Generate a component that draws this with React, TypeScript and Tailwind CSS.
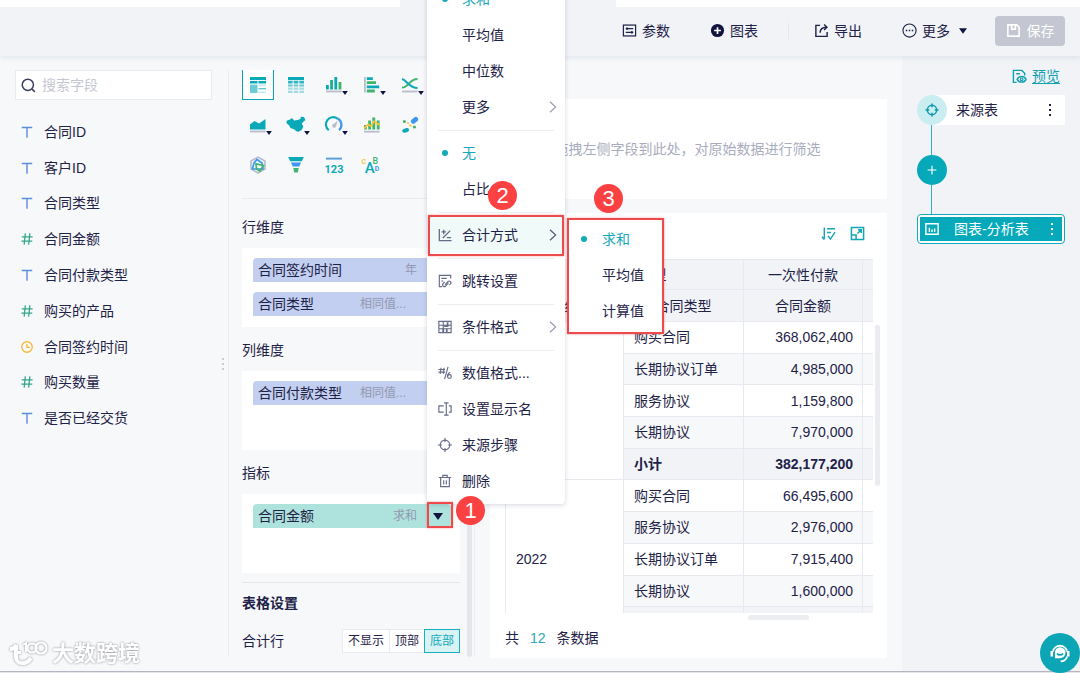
import React from "react";

type Kids = { children?: React.ReactNode };

function Icon({ children, size = "size-4", className = "" }: Kids & { size?: string; className?: string }) {
  return (
    <svg viewBox="0 0 16 16" fill="none" stroke="currentColor" strokeWidth="1.3" aria-hidden="true" className={`${size} shrink-0 ${className}`}>
      {children}
    </svg>
  );
}

function Caret({ className = "" }: { className?: string }) {
  return (
    <svg viewBox="0 0 10 7" aria-hidden="true" className={`shrink-0 fill-[#10143f] ${className}`}>
      <path d="M0 0h10L5 7z" />
    </svg>
  );
}

/* ---------- header ---------- */

function Header() {
  return (
    <header className="relative z-10 shrink-0 bg-[#f1f3f7] shadow-[0_2px_5px_rgba(200,210,220,0.45)]">
      <div className="flex h-[7px] justify-between">
        <div className="w-[400px] bg-white" />
        <div className="w-[464px] bg-white" />
      </div>
      <div className="flex h-[49px] items-center justify-end pr-[15px] pb-[2px]">
        <button className="flex items-center gap-[5px]">
          <Icon size="size-[15px]">
            <rect x="1.5" y="2.2" width="13" height="11.6" />
            <path d="M4 6h8M4 10h8" />
            <path d="M5.5 4.8v2.4M10.5 8.8v2.4" strokeWidth="2" />
          </Icon>
          参数
        </button>
        <button className="ml-10 flex items-center gap-[5px]">
          <Icon size="size-[15px]">
            <circle cx="8" cy="8" r="7" fill="#10143f" stroke="none" />
            <path d="M8 4.4v7.2M4.4 8h7.2" stroke="#fff" strokeWidth="1.8" />
          </Icon>
          图表
        </button>
        <span className="mr-[25px] ml-[30px] h-4 w-px bg-[#e4e7ed]" />
        <button className="flex items-center gap-[5px]">
          <Icon size="size-[15px]">
            <path d="M6.5 2.5H2v11.8h12V9.500" strokeWidth="1.5" />
            <path d="M6.500 10.5c0-4 2-6 7-6M10.8 1.6l3 2.9-3 2.9" strokeWidth="1.5" />
          </Icon>
          导出
        </button>
        <button className="ml-10 flex items-center gap-[5px]">
          <Icon size="size-[15px]">
            <circle cx="8" cy="8" r="7" strokeWidth="1.2" />
            <path d="M4 8h1.6M7.2 8h1.6M10.4 8H12" strokeWidth="1.6" />
          </Icon>
          更多
          <Caret className="ml-1 h-[6px] w-2" />
        </button>
        <button className="ml-7 flex h-[30px] w-[70px] items-center justify-center gap-[6px] rounded-sm bg-[#c4c6d1] text-white">
          <Icon size="size-[15px]">
            <path d="M2 2h9.5L14 4.5V14H2zM6 2v4.5h4V2" strokeWidth="1.7" />
          </Icon>
          保存
        </button>
      </div>
    </header>
  );
}

/* ---------- field list ---------- */

type FieldKind = "text" | "number" | "date";

const fields: { name: string; kind: FieldKind }[] = [
  { name: "合同ID", kind: "text" },
  { name: "客户ID", kind: "text" },
  { name: "合同类型", kind: "text" },
  { name: "合同金额", kind: "number" },
  { name: "合同付款类型", kind: "text" },
  { name: "购买的产品", kind: "number" },
  { name: "合同签约时间", kind: "date" },
  { name: "购买数量", kind: "number" },
  { name: "是否已经交货", kind: "text" },
];

function FieldIcon({ kind }: { kind: FieldKind }) {
  if (kind === "text")
    return (
      <Icon size="size-3" className="text-[#5d8fd8]">
        <path d="M1 2h14M8 2v13.500" strokeWidth="1.9" />
      </Icon>
    );
  if (kind === "number")
    return (
      <Icon size="size-3" className="text-[#35a58c]">
        <path d="M5.800 .5 4.200 15.500M11.800 .5l-1.600 15M1 5.200h14.500M.5 10.800h14.500" strokeWidth="1.7" />
      </Icon>
    );
  return (
    <Icon size="size-3" className="text-[#f5b83a]">
      <circle cx="8" cy="8" r="7" strokeWidth="1.8" />
      <path d="M8 4v4.5h4" strokeWidth="1.8" />
    </Icon>
  );
}

function FieldPanel() {
  return (
    <aside className="flex w-[229px] shrink-0 py-[14px]">
      <div className="flex min-w-0 flex-1 flex-col border-r border-[#eaedf1] pl-[15px]">
        <label className="mr-4 flex h-[30px] items-center gap-[6px] border border-[#e9ebef] bg-white px-[5px]">
          <Icon size="size-[15px]" className="text-[#3a3f5e]">
            <circle cx="7.3" cy="7.3" r="6" strokeWidth="1.6" />
            <path d="m11.6 11.6 3.2 3.2" strokeWidth="1.6" />
          </Icon>
          <input aria-label="搜索字段" placeholder="搜索字段" className="w-full min-w-0 bg-transparent outline-none placeholder:text-[#c5c7d2]" />
        </label>
        <ul className="mt-[14px] grid h-[322px] grid-rows-9">
          {fields.map((f) => (
            <li key={f.name} className="flex items-center gap-[11px] pl-[6px]">
              <FieldIcon kind={f.kind} />
              {f.name}
            </li>
          ))}
        </ul>
      </div>
      <span className="absolute top-[358px] left-[222px] flex flex-col gap-[3px]">
        <i className="size-[2px] bg-[#c9ccd5]" />
        <i className="size-[2px] bg-[#c9ccd5]" />
        <i className="size-[2px] bg-[#c9ccd5]" />
      </span>
    </aside>
  );
}

/* ---------- chart type icons ---------- */

const T = "#0aa9b8";
const G = "#3fb46d";
const Y = "#f5c33b";
const B = "#3c97f0";
const GR = "#b9bccb";

const charts: { name: string; more?: boolean; art: React.ReactNode }[] = [
  {
    name: "分析表",
    art: (
      <g fill={T}>
        <path d="M1 1h16v3H1zM1 5h7.5v2.6H1zM9.5 5H17v2.6H9.5z" />
        <path d="M1 8.6h7.5V17H1z" opacity=".6" />
        <path d="M9.5 8.6H17v1.6H9.5zM9.5 15.4H17V17H9.5z" opacity=".25" />
        <path d="M9.5 12H17v1.4H9.5z" opacity=".65" />
      </g>
    ),
  },
  {
    name: "明细表",
    art: (
      <g fill={T}>
        <path d="M1 1h16v3.2H1z" />
        <path d="M1 5h4.6v2.4H1zM6.7 5h4.6v2.4H6.7zM12.4 5H17v2.4h-4.6z" opacity=".85" />
        <path d="M1 8.4h4.6v2.2H1zM6.7 8.4h4.6v2.2H6.7zM12.4 8.4H17v2.2h-4.6z" opacity=".6" />
        <path d="M1 11.6h4.6v2.2H1zM6.7 11.6h4.6v2.2H6.7zM12.4 11.6H17v2.2h-4.6zM1 14.8h4.6V17H1zM6.7 14.8h4.6V17H6.7zM12.4 14.8H17V17h-4.6z" opacity=".35" />
      </g>
    ),
  },
  {
    name: "柱状图",
    more: true,
    art: (
      <>
        <path d="M1 9h2.800v4.400H1zM9.400 1h2.800v12.400H9.400z" fill={T} />
        <path d="M5.200 4h2.800v9.400H5.200zM13.600 6h2.800v7.400h-2.800z" fill={G} />
        <path d="M5.200 4h2.800v9.400H5.200z" fill={T} opacity=".45" />
        <path d="M1 14.6h15.6v1.8H1z" fill={GR} />
      </>
    ),
  },
  {
    name: "条形图",
    more: true,
    art: (
      <>
        <path d="M1 1h1.8v15.6H1z" fill={GR} />
        <path d="M3.8 1.2h6v2.8h-6zM3.8 9.4h12.4v2.8H3.8z" fill={T} />
        <path d="M3.8 5.2H13V8H3.8zM3.8 13.6h8v2.8h-8z" fill={G} />
      </>
    ),
  },
  {
    name: "折线图",
    more: true,
    art: (
      <g fill="none" strokeWidth="2">
        <path d="M1 11.5c7 0 7-8.5 15.5-8.5" stroke={G} />
        <path d="M1 3c5 1 7 9 15.5 9" stroke={T} />
        <path d="M1 15.5h15.6" stroke={GR} strokeWidth="1.8" />
      </g>
    ),
  },
  {
    name: "面积图",
    more: true,
    art: (
      <>
        <path d="M1 8.5 5.5 5l4.5 2.5L16.5 3v10.4H1z" fill={T} />
        <path d="M1 14.6h15.6v1.8H1z" fill={GR} />
      </>
    ),
  },
  {
    name: "地图",
    more: true,
    art: (
      <path
        d="M-.5 4.8 3 3.500 5 2l2 2.500 3.500-.4L13.5 3l.3-2.200L17 1l1.4 3-1.8 1.6-1.8 2.2 1.600 2.8-1.8 3.400-3 1.800-2.400-.6-1.700-1.800L3.500 12 2 9.200-.3 7.500z"
        fill={T}
      />
    ),
  },
  {
    name: "仪表盘",
    more: true,
    art: (
      <g fill="none" strokeWidth="2.200">
        <path d="M3.8 14.2A7.2 7.2 0 0 1 12.5 2.6" stroke={T} />
        <path d="M12.500 2.600A7 7 0 0 1 14 14.2" stroke={B} />
        <path d="M12.8 4.8 11 10.2a2 2 0 1 1-2.5-2.3z" fill={GR} stroke="none" />
      </g>
    ),
  },
  {
    name: "组合图",
    art: (
      <>
        <path d="M1 9h2.800v4.400H1zM9.400 1.600h2.800v11.8H9.400zM5.200 4.500h2.800v8.900H5.200zM13.800 4.500h2.800v8.900h-2.800z" fill={G} />
        <path d="M1 12.500 5 8.500l3 1.500L11 5.500l5.600 3.500" fill="none" stroke={Y} strokeWidth="1.8" />
        <path d="M1 14.8h15.6v1.8H1z" fill={GR} />
      </>
    ),
  },
  {
    name: "散点图",
    art: (
      <>
        <path d="m12.2 5.4 2.6-2" stroke={B} strokeWidth="4.8" strokeLinecap="round" />
        <path d="m3.2 14.8 2.8-.8" stroke={T} strokeWidth="4" strokeLinecap="round" />
        <circle cx="3.4" cy="5.4" r="1.5" fill={G} />
        <circle cx="13.5" cy="11" r="1.6" fill={G} />
        <circle cx="7" cy="7" r="1.1" fill={Y} />
        <circle cx="9.4" cy="9.6" r="1.2" fill={Y} />
      </>
    ),
  },
  {
    name: "雷达图",
    art: (
      <g fill="none" strokeWidth="1.7">
        <path d="M9 1.2 16 5v8l-7 4-7-4V5z" stroke={GR} />
        <path d="m8 3.5 5 3.5 1 6H3.5L5 7z" stroke={B} />
        <path d="m7 7.8 7.5 1.7-3.6 5.5-3.4-2z" stroke={G} />
      </g>
    ),
  },
  {
    name: "漏斗图",
    art: (
      <>
        <path d="M1.2 1h15.6l-2 4.2H3.2z" fill={T} />
        <path d="M4 6.6h10l-1.7 4H5.7z" fill={B} />
        <path d="M6.3 12h5.4l-1 4.6H7.3z" fill={G} />
      </>
    ),
  },
  {
    name: "指标卡",
    art: (
      <>
        <path d="M1 1.600h16v2H1z" fill="#5d9fdc" />
        <text x="9" y="16.600" textAnchor="middle" fontSize="11" fontWeight="700" fontFamily="Roboto" fill={T}>
          123
        </text>
      </>
    ),
  },
  {
    name: "词云",
    art: (
      <g fontFamily="Roboto">
        <text x="1.800" y="17" fontSize="15" fontWeight="500" fill={T}>A</text>
        <text x="-1.500" y="7.500" fontSize="7" fontWeight="700" fill={Y}>C</text>
        <text x="9.500" y="8" fontSize="9" fontWeight="500" fill={G}>B</text>
        <text x="11.800" y="15" fontSize="7" fontWeight="700" fill={B}>D</text>
      </g>
    ),
  },
];

function ChartPicker() {
  return (
    <div className="grid auto-rows-[40px] grid-cols-[repeat(5,38px)] border-b border-[#e8ebef] pb-2">
      {charts.map((c, i) => (
        <button
          key={c.name}
          aria-label={c.name}
          className={`relative flex h-[30px] w-8 items-center justify-center ${i === 0 ? "border border-t-0 border-[#0ba5b8] bg-white" : ""}`}
        >
          <svg viewBox="0 0 18 18" className="size-[18px] overflow-visible" aria-hidden="true">
            {c.art}
          </svg>
          {c.more && <Caret className="absolute right-[2px] bottom-[5px] h-[4px] w-[6px]" />}
        </button>
      ))}
    </div>
  );
}

/* ---------- configuration panel ---------- */

function Chip({ name, hint, green }: { name: string; hint: string; green?: boolean }) {
  return (
    <div className={`flex h-6 items-center rounded-t-[4px] pl-[5px] ${green ? "bg-[#aee2dc]" : "bg-[#c2cff0]"}`}>
      <span className="flex-1">{name}</span>
      <span className={`text-xs text-[#9298b0] ${hint.endsWith("...") ? "mr-[11px]" : ""}`}>{hint}</span>
      <button aria-label={`${name}设置`} className="flex h-6 w-[34px] items-center justify-center pl-2">
        <Caret className="h-[7px] w-[10px]" />
      </button>
    </div>
  );
}

function DropZone({ title, children }: Kids & { title: string }) {
  return (
    <section>
      <h3 className="flex h-11 items-center pt-[2px] leading-5">{title}</h3>
      <div className="flex h-[79px] flex-col gap-[10px] bg-white pt-[10px] pr-[9px] pl-[11px]">{children}</div>
    </section>
  );
}

function ConfigPanel() {
  return (
    <section className="flex w-[246px] shrink-0 py-[14px]">
      <div className="flex min-w-0 flex-1 border-r border-[#eaedf1] pl-[13px]">
        <div className="min-w-0 flex-1">
          <ChartPicker />
          <div className="flex flex-col pt-[5px]">
            <DropZone title="行维度">
              <Chip name="合同签约时间" hint="年" />
              <Chip name="合同类型" hint="相同值..." />
            </DropZone>
            <DropZone title="列维度">
              <Chip name="合同付款类型" hint="相同值..." />
            </DropZone>
            <DropZone title="指标">
              <Chip name="合同金额" hint="求和" green />
            </DropZone>
          </div>
          <div className="mt-[9px] border-t border-[#e4e7ec] pt-[10px]">
            <h3 className="leading-5 font-bold">表格设置</h3>
            <div className="mt-4 flex h-6 items-center justify-between">
              <span>合计行</span>
              <div className="flex h-6 text-xs">
                <button className="border border-r-0 border-[#e8ebef] bg-white px-[5px]">不显示</button>
                <button className="border border-r-0 border-[#e8ebef] bg-white px-[5px]">顶部</button>
                <button className="border border-[#12b0c0] bg-[#d9f3f5] px-[5px] text-[#12a9ba]">底部</button>
              </div>
            </div>
          </div>
        </div>
        <div className="mr-[2px] ml-[7px] flex w-[5px] flex-col justify-end">
          <div className="h-[400px] rounded-full bg-[#e5e6ec]" />
        </div>
      </div>
    </section>
  );
}

/* ---------- table ---------- */

const rows: { year?: string; type: string; amount: string; total?: boolean }[] = [
  { year: "2021", type: "购买合同", amount: "368,062,400" },
  { type: "长期协议订单", amount: "4,985,000" },
  { type: "服务协议", amount: "1,159,800" },
  { type: "长期协议", amount: "7,970,000" },
  { type: "小计", amount: "382,177,200", total: true },
  { year: "2022", type: "购买合同", amount: "66,495,600" },
  { type: "服务协议", amount: "2,976,000" },
  { type: "长期协议订单", amount: "7,915,400" },
  { type: "长期协议", amount: "1,600,000" },
  { type: "小计", amount: "78,987,000", total: true },
];

const line = "border-[#e6e9ef]";

function DataTable() {
  return (
    <div className="min-h-0 flex-1 overflow-hidden">
      <table className="h-[380px] w-[490px] table-fixed border-separate border-spacing-0 leading-5">
        <colgroup>
          <col className="w-[119px]" />
          <col className="w-[120px]" />
          <col className="w-[119px]" />
          <col />
        </colgroup>
        <thead className="bg-[#f1f3f7]">
          <tr className="h-[31px]">
            <th colSpan={2} className={`border-t border-r border-b border-l ${line} p-0 font-normal`}>合同付款类型</th>
            <th className={`border-t border-r border-b ${line} p-0 font-normal`}>一次性付款</th>
            <th className={`border-t border-b ${line} p-0`} />
          </tr>
          <tr className="h-8">
            <th className={`border-r border-b border-l ${line} p-0 font-normal`}>合同签约时间</th>
            <th className={`border-r border-b ${line} p-0 font-normal`}>合同类型</th>
            <th className={`border-r border-b ${line} p-0 font-normal`}>合同金额</th>
            <th className={`border-b ${line} p-0`} />
          </tr>
        </thead>
        <tbody>
          {rows.map((r, i) => (
            <tr key={i} className={r.total ? "bg-[#f1f3f7] font-bold" : i % 5 === 1 || i % 5 === 3 ? "bg-[#f7f8fa]" : "bg-white"}>
              {r.year && (
                <td rowSpan={5} className={`border-r border-b border-l ${line} bg-white p-0 pl-[10px]`}>
                  {r.year}
                </td>
              )}
              <td className={`border-r border-b ${line} p-0 pl-[10px]`}>{r.type}</td>
              <td className={`border-r border-b ${line} p-0 pr-[9px] text-right`}>{r.amount}</td>
              <td className={`border-b ${line} p-0`} />
            </tr>
          ))}
        </tbody>
      </table>
    </div>
  );
}

function Main() {
  return (
    <main className="flex min-w-0 flex-1 flex-col gap-[14px] px-[15px] pt-[43px] pb-[13px]">
      <div className="flex h-[100px] shrink-0 items-center justify-center bg-white pr-[2px] whitespace-nowrap text-[#a9acbd]">
        拖拽左侧字段到此处，对原始数据进行筛选
      </div>
      <div className="flex min-h-0 flex-1 flex-col bg-white pl-[15px]">
        <div className="flex h-[46px] shrink-0 items-center justify-end gap-[14px] pr-[22px] pb-[5px] text-[#12a5b6]">
          <button aria-label="排序">
            <Icon size="size-[15px]" className="block">
              <path d="M3.500 1.500v12.500M1 11.500l2.500 3M6.500 3H15M6.500 7h4M7.500 10.500l2.500 3.500 5-7.500" strokeWidth="1.500" />
            </Icon>
          </button>
          <button aria-label="放大">
            <Icon size="size-[15px]" className="block">
              <path d="M1.5 1.5h13v13h-13zM1.5 9.5h5v5M8 8l4-4M8.5 4H12v3.5" strokeWidth="1.6" />
            </Icon>
          </button>
        </div>
        <div className="flex min-h-0 flex-1">
          <DataTable />
          <div className="mr-[7px] ml-[2px] w-[5px] pt-[66px]">
            <div className="h-[161px] rounded-full bg-[#ebecf0]" />
          </div>
        </div>
        <div className="mt-[2px] ml-[243px] h-[5px] w-[61px] shrink-0 rounded-full bg-[#ecedf0]" />
        <p className="flex h-[38px] shrink-0 items-center gap-[11px] pb-[3px]">
          共 <span className="text-[#2aa9ba]">12</span> 条数据
        </p>
      </div>
    </main>
  );
}

/* ---------- flow panel ---------- */

function Dots({ className }: { className: string }) {
  return (
    <span className={`flex flex-col gap-[3px] ${className}`}>
      <i className="size-[2px] bg-current" />
      <i className="size-[2px] bg-current" />
      <i className="size-[2px] bg-current" />
    </span>
  );
}

function FlowPanel() {
  return (
    <aside className="w-[178px] shrink-0 bg-[#f1f3f7] px-[15px] pt-[10px]">
      <a href="#preview" className="mr-[5px] flex h-5 items-center justify-end gap-[5px] text-[#129fb2]">
        <Icon size="size-[15px]">
          <path d="M5 14.300H1.500V1.500h9L13.500 4.500V7M4.500 5h4" strokeWidth="1.500" />
          <path d="M5.500 11c2-4 7.500-4 9.500 0-2 4-7.500 4-9.500 0z" strokeWidth="1.500" />
          <circle cx="10.300" cy="11" r="1.400" />
        </Icon>
        <span className="underline underline-offset-2">预览</span>
      </a>
      <div className="mt-[9px] flex flex-col">
        <div className="flex h-[30px] items-center bg-gradient-to-r from-transparent from-[15px] to-white to-[15px]">
          <span className="flex size-[30px] items-center justify-center rounded-full bg-[#c9edf0] text-[#0d9aac]">
            <Icon size="size-[14px]">
              <circle cx="8" cy="8" r="5.3" strokeWidth="1.7" />
              <path d="M8 .5v4.300M8 11.200v4.300M.5 8h4.300M11.200 8h4.300" strokeWidth="1.7" />
            </Icon>
          </span>
          <span className="ml-[9px] flex-1">来源表</span>
          <button aria-label="来源表操作">
            <Dots className="mr-[14px]" />
          </button>
        </div>
        <span className="ml-[14px] h-[30px] w-px bg-[#2fb3c2]" />
        <button aria-label="添加步骤" className="flex size-[30px] items-center justify-center rounded-full bg-[#05a9ba] text-white">
          <Icon size="size-[10px]">
            <path d="M8 1v14M1 8h14" strokeWidth="1.8" />
          </Icon>
        </button>
        <span className="ml-[14px] h-[29px] w-px bg-[#2fb3c2]" />
        <div className="h-[30px] rounded-sm border border-[#12a9ba] bg-white p-[2px]">
          <div className="flex h-full items-center bg-[#05a9ba] pl-[5px] text-white">
            <Icon size="size-[14px]">
              <path d="M1 2h14v12H1zM5 6.500v5M8 8.500v3M11 7.500v4" strokeWidth="1.6" />
            </Icon>
            <span className="ml-[15px] flex-1 whitespace-nowrap">图表-分析表</span>
            <button aria-label="分析表操作">
              <Dots className="mr-[9px]" />
            </button>
          </div>
        </div>
      </div>
    </aside>
  );
}

/* ---------- menus ---------- */

function MenuItem({ children, icon, active, dot, arrow }: Kids & { icon?: React.ReactNode; active?: boolean; dot?: boolean; arrow?: boolean }) {
  return (
    <button
      role="menuitem"
      className={`flex h-9 w-full shrink-0 items-center pr-[6px] pl-[11px] text-left ${active ? "bg-[#f0faf9]" : ""} ${dot ? "text-[#12a9b8]" : ""}`}
    >
      <span className="flex w-6 shrink-0 text-[#666b87]">
        {icon && <Icon size="size-[14px]">{icon}</Icon>}
        {dot && <i className="ml-1 size-[6px] rounded-full bg-[#12a9b8]" />}
      </span>
      <span className="flex-1 whitespace-nowrap">{children}</span>
      {arrow && (
        <Icon size="size-3" className={active ? "text-[#555a75]" : "text-[#9a9db0]"}>
          <path d="m4 1 7.500 7-7.500 7" strokeWidth="1.6" />
        </Icon>
      )}
    </button>
  );
}

function Separator() {
  return <hr className="mx-[11px] mt-[5px] mb-1 border-[#eceef2]" />;
}

function MetricMenu() {
  return (
    <div role="menu" className="absolute -top-6 left-[427px] z-20 w-[138px] rounded-b bg-white py-[5px] shadow-[0_1px_5px_rgba(60,70,100,0.22)]">
      <MenuItem dot>求和</MenuItem>
      <MenuItem>平均值</MenuItem>
      <MenuItem>中位数</MenuItem>
      <MenuItem arrow>更多</MenuItem>
      <Separator />
      <MenuItem dot>无</MenuItem>
      <MenuItem>占比</MenuItem>
      <Separator />
      <MenuItem active arrow icon={<path d="M1.500 1v13.500H15.500M5.500 11.500 14 3M4 4.500h5M6.500 2v5M10 11h5" strokeWidth="1.5" />}>
        合计方式
      </MenuItem>
      <Separator />
      <MenuItem icon={<path d="M14.500 5V1.500h-13v13h3M4 5h6M4 8h2M8 12.500l3.500-4a2 2 0 0 1 3 2.500l-1.500 1.500M12 10l-3.500 4a2 2 0 0 1-3-2.500L7.500 9" />}>
        跳转设置
      </MenuItem>
      <Separator />
      <MenuItem arrow icon={<><path d="M1 1.500h14v13H1zM1 6h14M1 10h14M6 1.500v13" /><path d="M7 7h4V2.500M6 10v4M10 10v4" strokeWidth="2" /></>}>
        条件格式
      </MenuItem>
      <Separator />
      <MenuItem icon={<><path d="M3.500 2 2.500 9M7 2 6 9M.5 4h7.500M.5 7h7.500M11.500 1 7.500 15" /><circle cx="13" cy="12" r="2.200" /><path d="M11 12c0-3 1-4 3-4.500" /></>}>
        数值格式...
      </MenuItem>
      <MenuItem icon={<path d="M6.500 4.500H1v7h5.500M12.500 4.500H15v7h-2.500M9.500 1.500v13M7 1h5M7 15h5" />}>设置显示名</MenuItem>
      <MenuItem icon={<><circle cx="8" cy="8" r="5.500" /><path d="M8 0v4.500M8 11.500V16M0 8h4.500M11.500 8H16" /></>}>来源步骤</MenuItem>
      <MenuItem icon={<path d="M1 4h14M5.500 4V1.500h5V4M3 4v10.500h10V4M6.500 7v5M9.500 7v5" />}>删除</MenuItem>
    </div>
  );
}

function TotalMenu() {
  return (
    <div role="menu" className="absolute top-[217px] left-[568px] z-20 w-[95px] bg-white py-1 shadow-sm">
      {["求和", "平均值", "计算值"].map((t, i) => (
        <button key={t} role="menuitem" className={`flex h-9 w-full items-center pl-[13px] ${i === 0 ? "text-[#12a9b8]" : ""}`}>
          <span className="w-[21px]">{i === 0 && <i className="block size-[6px] rounded-full bg-[#12a9b8]" />}</span>
          {t}
        </button>
      ))}
    </div>
  );
}

function Callouts() {
  const badge = "absolute z-30 flex size-[29px] items-center justify-center rounded-full bg-[#fc4143] text-[22px] leading-none text-white";
  const frame = "pointer-events-none absolute z-30 border-2 border-[#ee4a4c] shadow-[0_0_2px_rgba(238,74,76,0.5)]";
  return (
    <>
      <div className={`${frame} top-[215px] left-[428px] h-[41px] w-[136px]`} />
      <div className={`${frame} top-[218px] left-[567px] h-[116px] w-[97px]`} />
      <div className={`${frame} top-[502px] left-[427px] h-[26px] w-[26px]`} />
      <span className={`${badge} top-[496px] left-[456px]`}>1</span>
      <span className={`${badge} top-[181px] left-[488px]`}>2</span>
      <span className={`${badge} top-[184px] left-[594px]`}>3</span>
    </>
  );
}

function Watermark() {
  return (
    <div className="absolute bottom-[5px] left-2 z-30 flex items-center gap-1 text-[22px] leading-7 font-bold text-white [filter:drop-shadow(0_0_1px_#8b8d94)]">
      <svg viewBox="0 0 40 28" className="h-7 w-10" fill="none" stroke="#fff" aria-hidden="true">
        <path d="M2 9c3 0 5-1 6-4v12c0 8 11 8 15 1" strokeWidth="4" />
        <path d="M8 12.500h5" strokeWidth="3" />
        <path d="M15 5l3-2v9" strokeWidth="2" />
        <circle cx="24" cy="8" r="4.500" strokeWidth="2.200" />
        <circle cx="33" cy="8" r="5.500" strokeWidth="2.200" />
      </svg>
      大数跨境
    </div>
  );
}

export default function App() {
  return (
    <div className="relative flex h-screen flex-col overflow-hidden bg-[#f7f8fa] font-['Liberation_Sans','Noto_Sans_CJK_SC',sans-serif] text-sm text-[#1e2247]">
      <Header />
      <div className="flex min-h-0 flex-1">
        <FieldPanel />
        <ConfigPanel />
        <Main />
        <FlowPanel />
      </div>
      <div className="h-[2px] shrink-0 border-t border-[#b4b6bf] bg-[#e4e5ea]" />
      <MetricMenu />
      <TotalMenu />
      <Callouts />
      <Watermark />
      <button aria-label="在线客服" className="absolute right-0 bottom-0 z-20 flex size-10 items-center justify-center rounded-full bg-[#0ba5b6] text-white">
        <Icon size="size-[22px]">
          <path d="M2.800 7A5.300 5.300 0 0 1 13.200 7M13.200 10.500c-.6 2.200-2.200 3.500-4.700 3.500" />
          <path d="M2 6.500v4M14 6.500v4" strokeWidth="1.800" />
          <path d="M8 3.800a4 4 0 0 1 0 8H4.300V7.500A3.800 3.800 0 0 1 8 3.800z" fill="#fff" stroke="none" />
          <path d="M5.800 8.300c1 1.500 3.400 1.500 4.400 0" stroke="#0ba5b6" />
        </Icon>
      </button>
    </div>
  );
}
